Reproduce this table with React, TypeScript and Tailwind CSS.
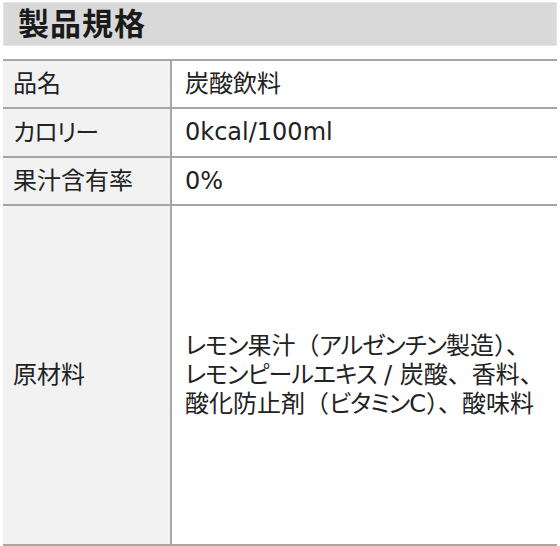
import React from "react";

function Kana({ text }: { text: string }) {
  const parts = text.split(/([\u30A0-\u30FF]+)/);
  return (
    <>
      {parts.map((p, i) =>
        /^[\u30A0-\u30FF]+$/.test(p) ? (
          <span key={i} className="[font-feature-settings:'palt'] tracking-[-0.04em]">
            {p}
          </span>
        ) : (
          <React.Fragment key={i}>{p}</React.Fragment>
        )
      )}
    </>
  );
}

export default function App() {
  const font = { fontFamily: '"DejaVu Sans", "Noto Sans CJK JP", sans-serif' };
  const rows: { label: string; value: string[]; h: string }[] = [
    { label: "品名", value: ["炭酸飲料"], h: "h-[48px]" },
    { label: "カロリー", value: ["0kcal/100ml"], h: "h-[49px]" },
    { label: "果汁含有率", value: ["0%"], h: "h-[48px]" },
    {
      label: "原材料",
      value: [
        "レモン果汁（アルゼンチン製造）、",
        "レモンピールエキス / 炭酸、香料、",
        "酸化防止剤（ビタミンC）、酸味料",
      ],
      h: "h-[340px]",
    },
  ];
  return (
    <div className="w-[560px] h-[546px] bg-white text-[#222]" style={font}>
      <div className="pt-[2px] px-[3px]">
        <div className="h-[44px] bg-[#d9d9d9] border border-[#e6e6e6] flex items-center pl-[14px]">
          <span className="text-[31px] font-bold text-[#1a1a1a] tracking-[1px]">製品規格</span>
        </div>
      </div>
      <div className="mt-[13px] mx-[3px] border-t-2 border-[#a6a6a6]">
        {rows.map((r, i) => (
          <div
            key={i}
            className={`grid grid-cols-[169px_1fr] border-b-2 border-[#a6a6a6] ${r.h}`}
          >
            <div className="bg-[#f2f2f2] border-r-2 border-[#a6a6a6] flex items-center pl-[10px] text-[24px]">
              <Kana text={r.label} />
            </div>
            <div className="flex items-center pl-[13px] text-[24px] leading-[29px]">
              <div>
                {r.value.map((line, j) => (
                  <div key={j} className="whitespace-nowrap">
                    <Kana text={line} />
                  </div>
                ))}
              </div>
            </div>
          </div>
        ))}
      </div>
    </div>
  );
}
